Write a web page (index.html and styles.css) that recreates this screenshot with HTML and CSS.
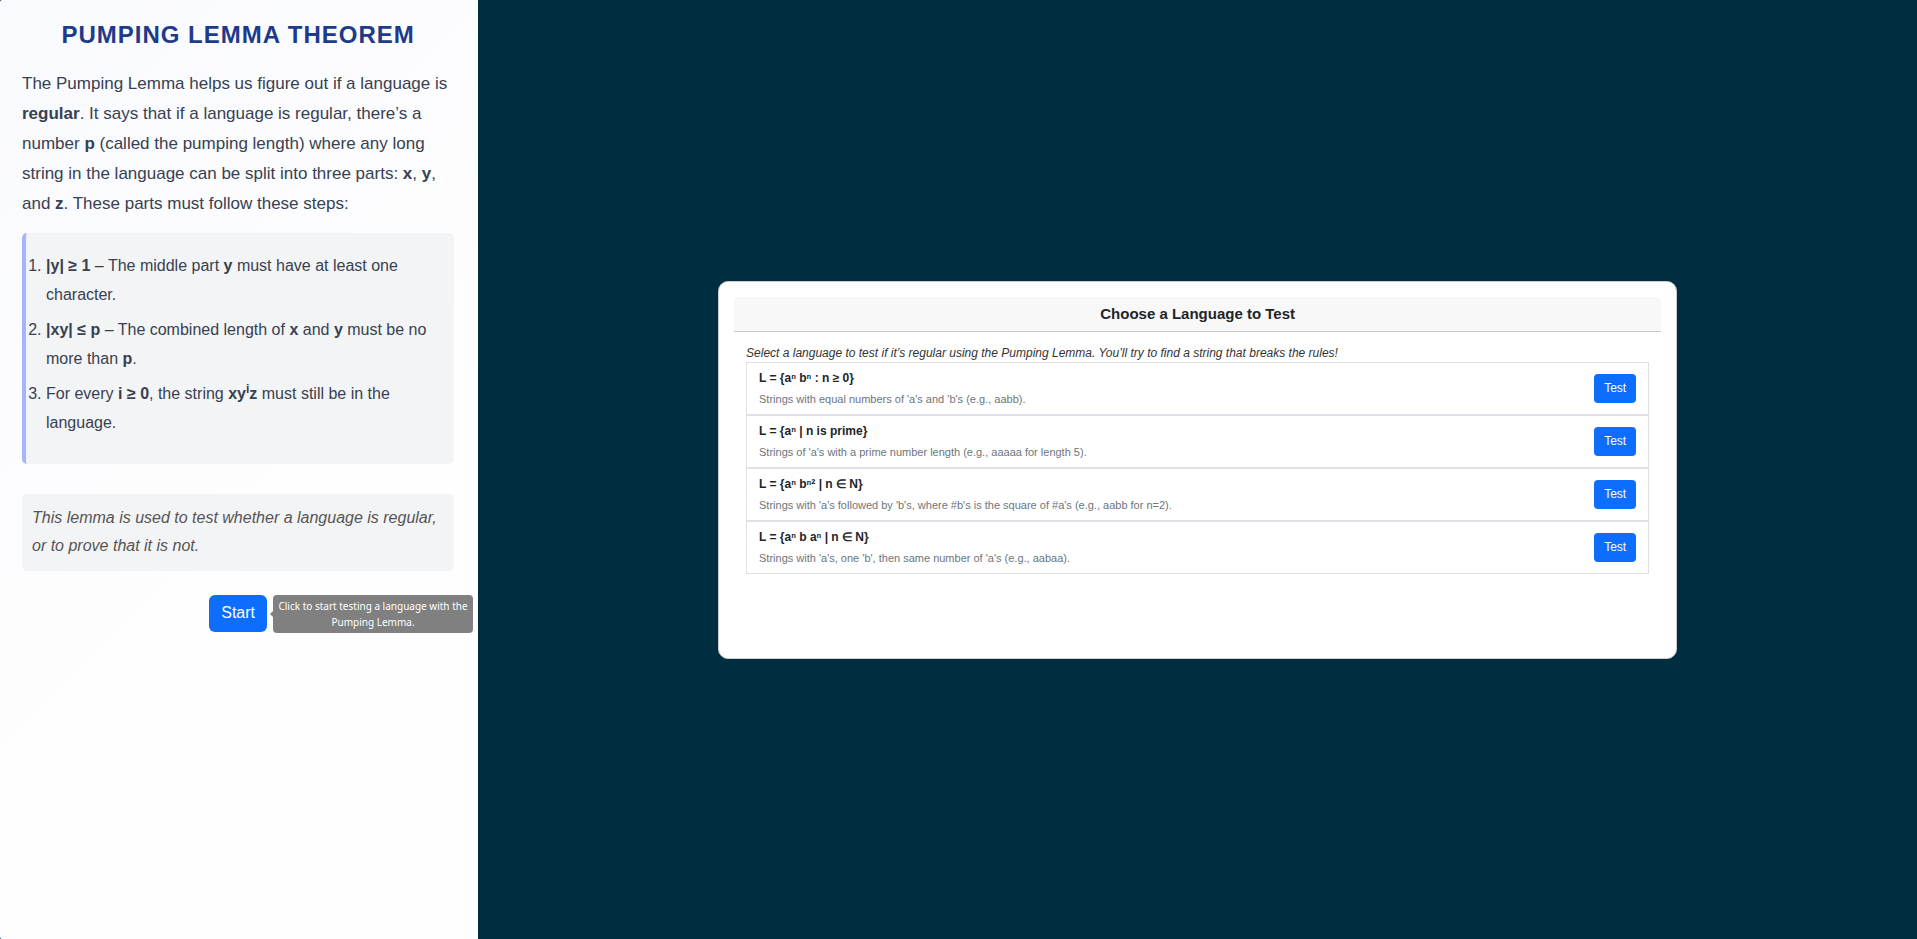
FILE: index.html
```html
<!DOCTYPE html>
<html lang="en">
<head>
<meta charset="utf-8">
<meta name="viewport" content="width=device-width, initial-scale=1">
<title>Pumping Lemma Theorem</title>
<link rel="stylesheet" href="styles.css">
</head>
<body>
<div class="layout">
  <aside class="sidebar">
    <h1 class="sidebar-title">Pumping Lemma Theorem</h1>
    <p class="intro">The Pumping Lemma helps us figure out if a language is <strong>regular</strong>. It says that if a language is regular, there’s a number <strong>p</strong> (called the pumping length) where any long string in the language can be split into three parts: <strong>x</strong>, <strong>y</strong>, and <strong>z</strong>. These parts must follow these steps:</p>
    <ol class="steps">
      <li><strong>|y| ≥ 1</strong> – The middle part <strong>y</strong> must have at least one character.</li>
      <li><strong>|xy| ≤ p</strong> – The combined length of <strong>x</strong> and <strong>y</strong> must be no more than <strong>p</strong>.</li>
      <li>For every <strong>i ≥ 0</strong>, the string <strong>xy<sup>i</sup>z</strong> must still be in the language.</li>
    </ol>
    <p class="note">This lemma is used to test whether a language is regular, or to prove that it is not.</p>
    <div class="start-row">
      <div class="start-anchor">
        <button type="button" class="btn btn-start" aria-describedby="start-tip">Start</button>
        <div class="tooltip" id="start-tip" role="tooltip">Click to start testing a language with the Pumping Lemma.</div>
      </div>
    </div>
  </aside>
  <main class="stage">
    <section class="card">
      <h2 class="card-header">Choose a Language to Test</h2>
      <div class="card-body">
        <p class="hint">Select a language to test if it’s regular using the Pumping Lemma. You’ll try to find a string that breaks the rules!</p>
        <ul class="languages">
          <li class="language">
            <div>
              <h3 class="language-name">L = {aⁿ bⁿ : n ≥ 0}</h3>
              <p class="language-desc">Strings with equal numbers of 'a's and 'b's (e.g., aabb).</p>
            </div>
            <button type="button" class="btn btn-test">Test</button>
          </li>
          <li class="language">
            <div>
              <h3 class="language-name">L = {aⁿ | n is prime}</h3>
              <p class="language-desc">Strings of 'a's with a prime number length (e.g., aaaaa for length 5).</p>
            </div>
            <button type="button" class="btn btn-test">Test</button>
          </li>
          <li class="language">
            <div>
              <h3 class="language-name">L = {aⁿ bⁿ² | n ∈ N}</h3>
              <p class="language-desc">Strings with 'a's followed by 'b's, where #b's is the square of #a's (e.g., aabb for n=2).</p>
            </div>
            <button type="button" class="btn btn-test">Test</button>
          </li>
          <li class="language">
            <div>
              <h3 class="language-name">L = {aⁿ b aⁿ | n ∈ N}</h3>
              <p class="language-desc">Strings with 'a's, one 'b', then same number of 'a's (e.g., aabaa).</p>
            </div>
            <button type="button" class="btn btn-test">Test</button>
          </li>
        </ul>
      </div>
    </section>
  </main>
</div>
</body>
</html>
```

FILE: styles.css
```css
* {
  box-sizing: border-box;
}

body {
  margin: 0;
  background: #002e41;
  color: #212529;
  font-family: "Liberation Sans", Arial, sans-serif;
}

h1, h2, h3, p, ol, ul {
  margin: 0;
}

.layout {
  display: grid;
  grid-template-columns: calc(25% - 1px) 1fr;
  min-height: 100vh;
}

/* Theory panel */
.sidebar {
  padding: 17px 24px 16px 22px;
  border-radius: 2px 0 0 2px;
  background: linear-gradient(135deg, #f9fafe, #fefefe 60%);
  color: #374151;
}

.sidebar-title {
  margin-bottom: 16px;
  color: #1e3a8a;
  font-size: 24px;
  line-height: 36px;
  letter-spacing: 1px;
  text-align: center;
  text-transform: uppercase;
}

.intro {
  margin-bottom: 14px;
  font-size: 17px;
  line-height: 30px;
}

.steps {
  margin-bottom: 30px;
  padding: 18px 20px 21px;
  border-left: 4px solid #a5b4fc;
  border-radius: 5px;
  background: #f3f4f6;
  font-size: 16px;
  line-height: 29px;
}

.steps li {
  margin-bottom: 6px;
}

.steps sup {
  font-size: 12px;
  line-height: 0;
}

.note {
  margin-bottom: 24px;
  padding: 10px 10px 11px;
  border-radius: 5px;
  background: #f3f4f6;
  color: #555555;
  font-size: 16px;
  font-style: italic;
  line-height: 28px;
}

.start-row {
  display: flex;
  justify-content: center;
}

.start-anchor {
  position: relative;
}

.btn {
  display: block;
  border: 0;
  background: #0d6efd;
  color: #ffffff;
  font-family: inherit;
  cursor: pointer;
}

.btn-start {
  padding: 6px 12px 7px;
  border-radius: 6px;
  font-size: 16px;
  line-height: 24px;
}

.tooltip {
  position: absolute;
  top: 0;
  left: 100%;
  width: 200px;
  margin-left: 6px;
  padding: 3px 4px;
  border-radius: 4px;
  background: #808080;
  color: #ffffff;
  font-family: "Noto Sans", sans-serif;
  font-size: 10px;
  line-height: 16px;
  text-align: center;
}

.tooltip::before {
  content: "";
  position: absolute;
  top: 50%;
  right: 100%;
  margin-top: -3px;
  border: 3px solid transparent;
  border-left-width: 0;
  border-right-color: #808080;
}

/* Language picker */
.stage {
  display: grid;
  grid-template-columns: 1fr 4fr 1fr;
  align-items: center;
}

.card {
  grid-column: 2;
  min-height: 378px;
  padding: 15px;
  border: 1px solid #cccccc;
  border-radius: 10px;
  background: #ffffff;
}

.card-header {
  padding: 6px 12px;
  border-bottom: 1px solid #c8c8c8;
  border-radius: 4px 4px 0 0;
  background: #f8f8f8;
  font-size: 15px;
  line-height: 22px;
  text-align: center;
}

.card-body {
  padding: 12px;
}

.hint {
  color: #333333;
  font-size: 12px;
  font-style: italic;
  line-height: 18px;
}

.languages {
  padding: 0;
  list-style: none;
}

.language {
  display: flex;
  align-items: center;
  justify-content: space-between;
  padding: 5px 12px;
  border: 1px solid #dee2e6;
}

.language-name {
  margin-bottom: 2px;
  font-size: 12px;
  line-height: 20px;
}

.language-desc {
  color: #6c757d;
  font-size: 11px;
  line-height: 19px;
}

.btn-test {
  padding: 4px 10px 5px;
  border-radius: 4px;
  font-size: 12px;
  line-height: 20px;
}
```
